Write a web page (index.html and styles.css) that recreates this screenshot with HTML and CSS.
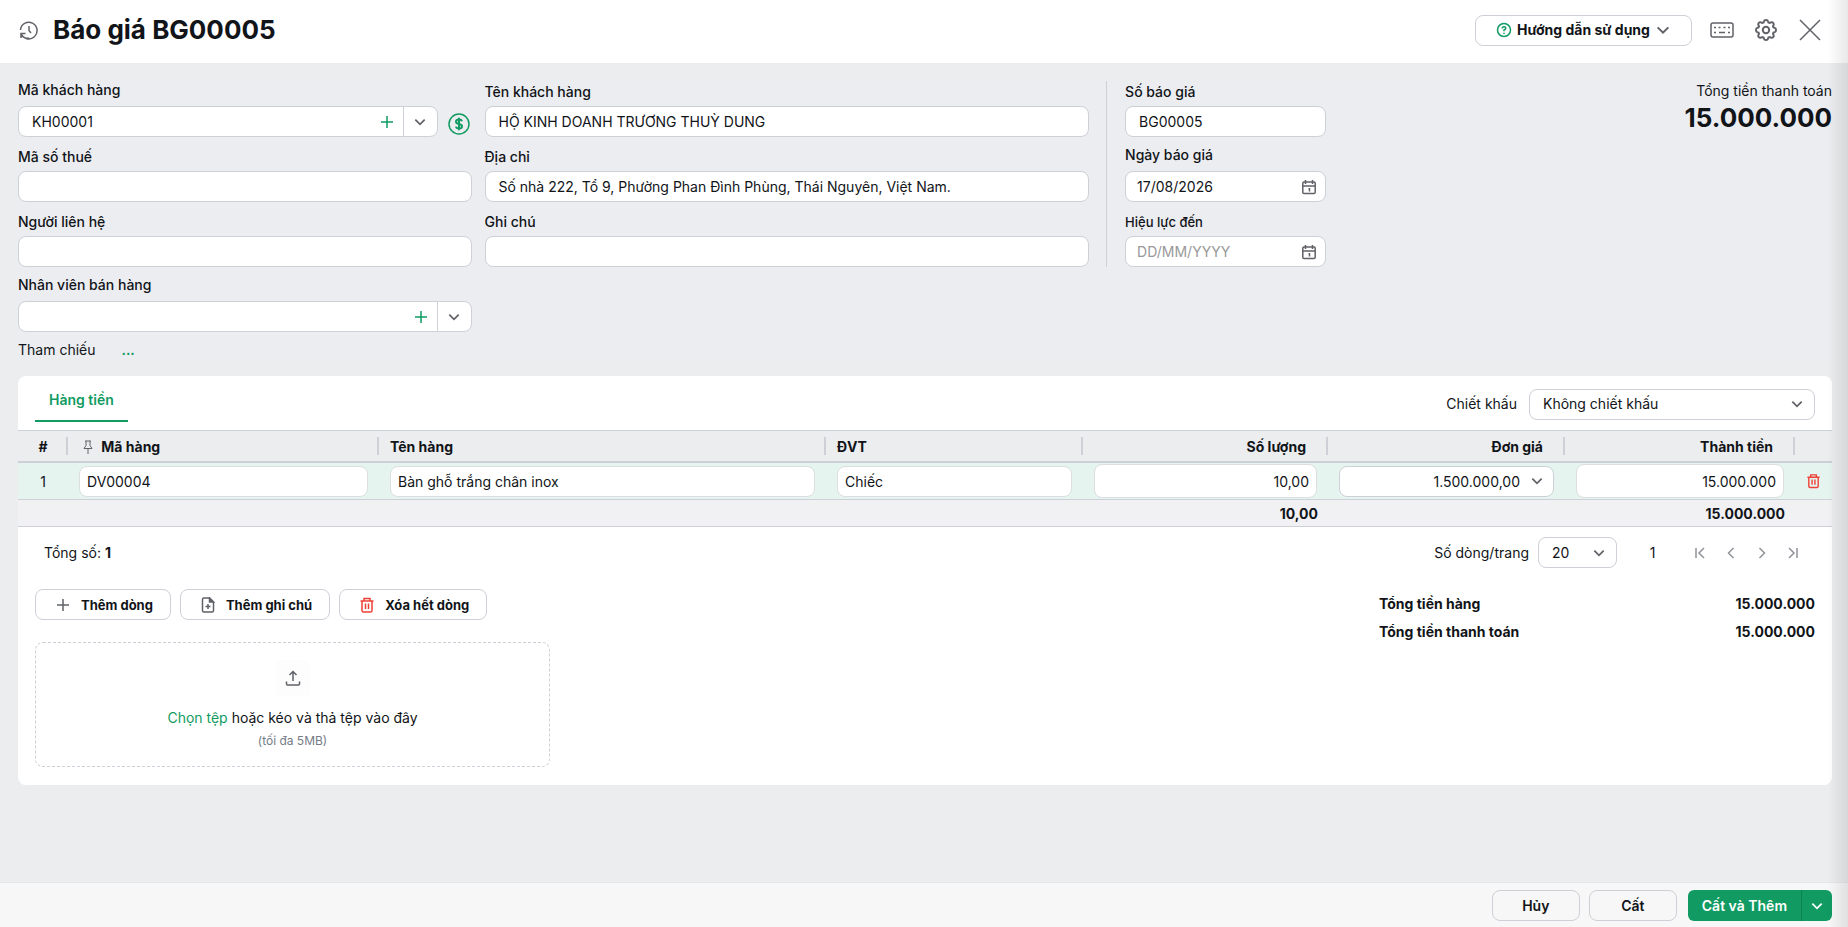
FILE: index.html
```html
<!doctype html>
<html lang="vi">
	<head>
		<meta charset="utf-8" />
		<meta name="viewport" content="width=device-width,initial-scale=1" />
		<title>Báo giá BG00005</title>
		<link rel="stylesheet" href="styles.css">
	</head>
	<body>
		<svg class="sprite" aria-hidden="true">
			<symbol id="chevron" viewBox="0 0 12 12"><path d="M2 4l4 4 4-4" /></symbol>
			<symbol id="plus" viewBox="0 0 14 14"><path d="M7 1v12M1 7h12" /></symbol>
			<symbol id="calendar" viewBox="0 0 16 16"><path d="M3 3h10q1.200 0 1.200 1.200v9q0 1.300-1.200 1.300H3q-1.200 0-1.200-1.300v-9Q1.800 3 3 3zM1.800 7h12.400M4.500 1v4M11.500 1v4M7.500 9.800h1v2.700" /></symbol>
			<symbol id="trash" viewBox="0 0 16 16"><path d="M1.500 4h13M5 4V1.500h6V4M3 4v9.500q0 1.500 1.500 1.500h7q1.500 0 1.500-1.500V4M6.500 6.500v5.500M9.500 6.500v5.500" /></symbol>
		</svg>

		<header class="header">
			<svg class="icon history" viewBox="0 0 20 20"><path d="M2 13.500a8.300 8.300 0 1 0-.5-3.500M2 18v-4.500h4.500M2.200 14a8.300 8.300 0 0 0 8 4.300M10 6v4.500l2 2.500" /></svg>
			<h1>Báo giá BG00005</h1>
			<button type="button" class="button help">
				<svg class="icon green" width="16" height="16" viewBox="0 0 16 16"><circle cx="8" cy="8" r="6.500" /><path d="M6.200 6.500q0-1.800 1.800-1.800t1.800 1.600Q9.800 7.400 8 8v1.200M8 10.700v1.200" /></svg>
				Hướng dẫn sử dụng
				<svg class="icon" width="16" height="16"><use href="#chevron" /></svg>
			</button>
			<button type="button" class="icon-button" aria-label="Phím tắt">
				<svg class="icon" width="24" height="24" viewBox="0 0 24 24"><rect x="1" y="5" width="22" height="14" rx="2" /><path d="M4 9.500h2M8.500 9.500h2M13.500 9.500h2M18 9.500h2M4 14.500h2M9 14.500h6M18 14.500h2" /></svg>
			</button>
			<button type="button" class="icon-button" aria-label="Thiết lập">
				<svg class="icon gear" width="24" height="24" viewBox="0 0 24 24"><circle cx="12" cy="12" r="3.200" /><path d="M12 2q1.700 0 2 1.300l.4 1.200 1.300.5 1.300-.7q1.200-.5 2.200.6t.4 2.100l-.6 1.300.5 1.200 1.300.4Q22 10.300 22 12t-1.200 2.100l-1.300.4-.5 1.200.6 1.300q.6 1-.4 2.100t-2.200.6l-1.300-.7-1.300.5-.4 1.200Q13.700 22 12 22t-2-1.300l-.4-1.200-1.300-.5-1.300.7q-1.200.5-2.200-.6t-.4-2.100l.6-1.300-.5-1.200-1.300-.4Q2 13.700 2 12t1.200-2.100l1.300-.4.5-1.200L4.400 7q-.6-1 .4-2.100t2.200-.6l1.300.7 1.300-.5.4-1.200Q10.300 2 12 2z" /></svg>
			</button>
			<button type="button" class="icon-button" aria-label="Đóng">
				<svg class="icon close" width="24" height="24" viewBox="0 0 24 24"><path d="M2 2l20 20M22 2L2 22" /></svg>
			</button>
		</header>

		<main class="main">
			<form class="form">
				<div class="column customer">
					<div class="field loose">
						<label for="customer-code">Mã khách hàng</label>
						<div class="field-row">
							<div class="combo">
								<input type="text" id="customer-code" value="KH00001" />
								<button type="button" class="add" aria-label="Thêm khách hàng"><svg class="icon" width="14" height="14"><use href="#plus" /></svg></button>
								<button type="button" class="caret" aria-label="Chọn khách hàng"><svg class="icon" width="14" height="14"><use href="#chevron" /></svg></button>
							</div>
							<button type="button" class="debt" aria-label="Công nợ">
								<svg class="icon" width="22" height="22" viewBox="0 0 22 22"><circle cx="11" cy="11" r="10" /><path class="thick" d="M14 8.300Q13.500 6.600 11 6.600 8 6.600 8 8.800q0 1.700 3 2.200t3 2.300q0 2.200-3 2.200-2.600 0-3-1.900M11 4.800v12.400" /></svg>
							</button>
						</div>
					</div>
					<div class="field">
						<label for="tax-code">Mã số thuế</label>
						<input class="box" type="text" id="tax-code" />
					</div>
					<div class="field">
						<label for="contact">Người liên hệ</label>
						<input class="box" type="text" id="contact" />
					</div>
					<div class="field loose">
						<label for="seller">Nhân viên bán hàng</label>
						<div class="combo">
							<input type="text" id="seller" />
							<button type="button" class="add" aria-label="Thêm nhân viên"><svg class="icon" width="14" height="14"><use href="#plus" /></svg></button>
							<button type="button" class="caret" aria-label="Chọn nhân viên"><svg class="icon" width="14" height="14"><use href="#chevron" /></svg></button>
						</div>
					</div>
					<p class="reference">Tham chiếu <a href="#">...</a></p>
				</div>
				<div class="column details">
					<div class="field">
						<label for="customer-name">Tên khách hàng</label>
						<input class="box" type="text" id="customer-name" value="HỘ KINH DOANH TRƯƠNG THUỲ DUNG" />
					</div>
					<div class="field">
						<label for="address">Địa chỉ</label>
						<input class="box" type="text" id="address" value="Số nhà 222, Tổ 9, Phường Phan Đình Phùng, Thái Nguyên, Việt Nam." />
					</div>
					<div class="field">
						<label for="note">Ghi chú</label>
						<input class="box" type="text" id="note" />
					</div>
				</div>
				<div class="column quote">
					<div class="field">
						<label for="quote-number">Số báo giá</label>
						<input class="box" type="text" id="quote-number" value="BG00005" />
					</div>
					<div class="field loose">
						<label for="quote-date">Ngày báo giá</label>
						<div class="combo date">
							<input type="text" id="quote-date" value="17/08/2026" />
							<button type="button" aria-label="Chọn ngày báo giá"><svg class="icon" width="16" height="16"><use href="#calendar" /></svg></button>
						</div>
					</div>
					<div class="field small">
						<label for="valid-until">Hiệu lực đến</label>
						<div class="combo date">
							<input type="text" id="valid-until" placeholder="DD/MM/YYYY" />
							<button type="button" aria-label="Chọn ngày hiệu lực"><svg class="icon" width="16" height="16"><use href="#calendar" /></svg></button>
						</div>
					</div>
				</div>
				<div class="grand-total">
					<p>Tổng tiền thanh toán</p>
					<strong>15.000.000</strong>
				</div>
			</form>

			<section class="card">
				<div class="card-head">
					<button type="button" class="tab">Hàng tiền</button>
					<label for="discount">Chiết khấu</label>
					<div class="select discount">
						<select id="discount"><option>Không chiết khấu</option></select>
						<svg class="icon" width="14" height="14"><use href="#chevron" /></svg>
					</div>
				</div>

				<table class="items">
					<colgroup>
						<col class="col-index" /><col class="col-code" /><col class="col-name" /><col class="col-unit" />
						<col class="col-quantity" /><col class="col-price" /><col class="col-amount" /><col class="col-action" />
					</colgroup>
					<thead>
						<tr>
							<th class="center">#</th>
							<th>
								<svg class="icon pin" width="12" height="14" viewBox="0 0 12 14"><path d="M3 1h6M4 1v4.500L2 8.500h8L8 5.500V1M6 8.500V14" /></svg>
								Mã hàng
							</th>
							<th>Tên hàng</th>
							<th>ĐVT</th>
							<th class="number">Số lượng</th>
							<th class="number">Đơn giá</th>
							<th class="number">Thành tiền</th>
							<th aria-label="Thao tác"></th>
						</tr>
					</thead>
					<tbody>
						<tr>
							<td class="center">1</td>
							<td><input type="text" value="DV00004" aria-label="Mã hàng" /></td>
							<td><input type="text" value="Bàn ghỗ trắng chân inox" aria-label="Tên hàng" /></td>
							<td><input type="text" value="Chiếc" aria-label="ĐVT" /></td>
							<td><input class="amount" type="text" value="10,00" aria-label="Số lượng" /></td>
							<td>
								<div class="combo price">
									<input type="text" value="1.500.000,00" aria-label="Đơn giá" />
									<button type="button" aria-label="Chọn đơn giá"><svg class="icon" width="14" height="14"><use href="#chevron" /></svg></button>
								</div>
							</td>
							<td><input class="amount" type="text" value="15.000.000" aria-label="Thành tiền" /></td>
							<td class="action"><button type="button" class="remove" aria-label="Xóa dòng"><svg class="icon" width="15" height="16"><use href="#trash" /></svg></button></td>
						</tr>
					</tbody>
					<tfoot>
						<tr>
							<td colspan="4"></td>
							<td>10,00</td>
							<td></td>
							<td>15.000.000</td>
							<td></td>
						</tr>
					</tfoot>
				</table>

				<div class="pager">
					<p>Tổng số: <b>1</b></p>
					<label for="page-size">Số dòng/trang</label>
					<div class="select page-size">
						<select id="page-size"><option>20</option></select>
						<svg class="icon" width="14" height="14"><use href="#chevron" /></svg>
					</div>
					<span class="page">1</span>
					<nav class="page-nav">
						<button type="button" aria-label="Trang đầu"><svg class="icon" width="12" height="12" viewBox="0 0 12 12"><path d="M2 1v10M10 1L5 6l5 5" /></svg></button>
						<button type="button" aria-label="Trang trước"><svg class="icon" width="12" height="12" viewBox="0 0 12 12"><path d="M8.500 1l-5 5 5 5" /></svg></button>
						<button type="button" aria-label="Trang sau"><svg class="icon" width="12" height="12" viewBox="0 0 12 12"><path d="M3.500 1l5 5-5 5" /></svg></button>
						<button type="button" aria-label="Trang cuối"><svg class="icon" width="12" height="12" viewBox="0 0 12 12"><path d="M2 1l5 5-5 5M10 1v10" /></svg></button>
					</nav>
				</div>

				<div class="card-foot">
					<div class="actions">
						<div class="toolbar">
							<button type="button" class="button"><svg class="icon" width="16" height="16" viewBox="0 0 16 16"><path d="M8 2v12M2 8h12" /></svg>Thêm dòng</button>
							<button type="button" class="button"><svg class="icon" width="16" height="16" viewBox="0 0 16 16"><path d="M9.500 1H4Q2.500 1 2.500 2.500v11Q2.500 15 4 15h8q1.500 0 1.500-1.500V5z" /><path class="fill" d="M9.500 1v4h4z" /><path d="M8 7v5M5.500 9.500h5" /></svg>Thêm ghi chú</button>
							<button type="button" class="button danger"><svg class="icon" width="16" height="16"><use href="#trash" /></svg>Xóa hết dòng</button>
						</div>
						<div class="dropzone">
							<span class="upload-icon"><svg class="icon" width="16" height="16" viewBox="0 0 16 16"><path d="M8 11V1.500M4.500 5L8 1.500 11.500 5M1.500 11.500V14q0 1 1 1h11q1 0 1-1v-2.500" /></svg></span>
							<p><a href="#">Chọn tệp</a> hoặc kéo và thả tệp vào đây</p>
							<small>(tối đa 5MB)</small>
						</div>
					</div>
					<dl class="totals">
						<div><dt>Tổng tiền hàng</dt><dd>15.000.000</dd></div>
						<div><dt>Tổng tiền thanh toán</dt><dd>15.000.000</dd></div>
					</dl>
				</div>
			</section>
		</main>

		<footer class="footer">
			<button type="button" class="button">Hủy</button>
			<button type="button" class="button">Cất</button>
			<div class="split">
				<button type="button">Cất và Thêm</button>
				<button type="button" class="more" aria-label="Tùy chọn khác"><svg class="icon" width="14" height="14"><use href="#chevron" /></svg></button>
			</div>
		</footer>
		<div class="edge"></div>
	</body>
</html>
```
FILE: styles.css
```css
:root {
	--green: #119b62;
	--border: #cdd0d6;
	--text: #111418;
	--icon: #606268;
	--control: 31px;
}

* {
	box-sizing: border-box;
}

body {
	display: flex;
	flex-direction: column;
	min-height: 100vh;
	margin: 0;
	background: #ebedef;
	color: var(--text);
	font: 14px/20px Inter, "Liberation Sans", sans-serif;
}

h1,
p,
dl,
dd {
	margin: 0;
}

a {
	color: var(--green);
	text-decoration: none;
}

button,
input,
select {
	margin: 0;
	border: 0;
	padding: 0;
	background: none;
	color: inherit;
	font: inherit;
}

button {
	display: flex;
	align-items: center;
	justify-content: center;
}

input {
	min-width: 0;
	width: 100%;
}

.sprite {
	display: none;
}

.icon {
	flex: none;
	fill: none;
	stroke: currentColor;
	stroke-width: 1.5;
	color: var(--icon);
}

.icon .fill {
	fill: currentColor;
}

.icon .thick {
	stroke-width: 2;
}

.icon.green {
	color: var(--green);
}

/* header */
.header {
	display: flex;
	align-items: center;
	height: 63px;
	padding: 0 26px 3px 19px;
	background: #fff;
}

.header h1 {
	flex: 1;
	padding-left: 14px;
	font-size: 26px;
	line-height: 34px;
	font-weight: 700;
}

.history {
	width: 20px;
	height: 20px;
}

.button {
	height: var(--control);
	border: 1px solid var(--border);
	border-radius: 8px;
	background: #fff;
	font-weight: 600;
}

.help {
	gap: 5px;
	width: 217px;
	margin-right: 18px;
	font-weight: 700;
}

.icon-button {
	width: 24px;
	height: 24px;
	margin-left: 20px;
}

.help + .icon-button {
	margin-left: 0;
}

.gear {
	stroke-width: 2;
}

/* quote form */
.main {
	flex: 1;
	padding: 18px 16px 18px 18px;
}

.form {
	display: flex;
	gap: 13px;
	background: #ecedf1;
}

.column {
	display: flex;
	flex-direction: column;
	gap: 9px;
}

.customer {
	width: 25%;
}

.details {
	width: 33.33%;
}

.quote {
	align-self: flex-start;
	width: 220px;
	margin-left: 4px;
	border-left: 1px solid var(--border);
	padding-left: 18px;
}

.field {
	display: flex;
	flex-direction: column;
	justify-content: flex-end;
	gap: 4px;
	height: 56px;
	font-weight: 500;
}

.field.loose {
	gap: 6px;
}

.field.small label {
	font-size: 13px;
}

.field input {
	font-weight: 400;
}

.field-row {
	display: flex;
	gap: 8px;
}

.box,
.combo {
	flex: none;
	height: var(--control);
	border: 1px solid var(--border);
	border-radius: 8px;
	background: #fff;
}

.box {
	padding: 0 13px;
}

.combo {
	display: flex;
}

.combo input {
	flex: 1;
	padding-left: 13px;
}

.combo.date input {
	padding-left: 11px;
}

.combo.date button {
	width: 32px;
}

.combo ::placeholder {
	color: #999;
}

.field-row .combo {
	flex: 1;
}

.add {
	width: 32px;
}

.add .icon,
.debt .icon {
	color: var(--green);
}

.caret {
	width: 34px;
	border-left: 1px solid var(--border);
}

.debt {
	width: 26px;
	height: 35px;
	margin-bottom: -4px;
}

.reference {
	height: 17px;
	line-height: 17px;
}

.reference a {
	margin-left: 22px;
	font-weight: 600;
}

.grand-total {
	margin-left: auto;
	text-align: right;
}

.grand-total strong {
	display: block;
	font-size: 26px;
	line-height: 34px;
	font-weight: 700;
}

/* items card */
.card {
	margin-top: 18px;
	border-radius: 8px;
	background: #fff;
}

.card-head {
	display: flex;
	align-items: center;
	height: 54px;
	padding: 2px 17px 0;
}

.tab {
	align-self: flex-start;
	height: 44px;
	margin-right: auto;
	border-bottom: 2px solid var(--green);
	padding: 2px 14px 0;
	color: var(--green);
	font-weight: 600;
}

.select {
	display: grid;
	align-items: center;
	height: var(--control);
	margin-left: 12px;
	border: 1px solid var(--border);
	border-radius: 8px;
	background: #fff;
}

.select > * {
	grid-area: 1 / 1;
}

.select select {
	appearance: none;
	height: 100%;
	padding-left: 13px;
}

.select .icon {
	justify-self: end;
	margin-right: 10px;
	pointer-events: none;
}

.discount {
	width: 286px;
}

.items {
	width: 100%;
	table-layout: fixed;
	border-collapse: separate;
	border-spacing: 0;
}

.col-index {
	width: 50px;
}

.col-code {
	width: 311px;
}

.col-unit {
	width: 257px;
}

.col-quantity {
	width: 245px;
}

.col-price {
	width: 237px;
}

.col-amount {
	width: 230px;
}

.col-action {
	width: 37px;
}

.items th {
	height: 33px;
	border: solid var(--border);
	border-width: 1px 0 2px;
	padding: 1px 0 0 11px;
	background: linear-gradient(var(--border), var(--border)) right / 2px 18px no-repeat #ebedef;
	font-weight: 700;
	text-align: left;
}

.items th:last-child {
	background-image: none;
}

.items th.number {
	padding-right: 22px;
	text-align: right;
}

.items .center {
	padding: 1px 0 0;
	text-align: center;
}

.pin {
	margin: 0 4px 0 3px;
	vertical-align: -2px;
	stroke-width: 1;
}

.items td {
	height: 37px;
	border-bottom: 1px solid var(--border);
	padding: 0 11px;
	background: #e5f4ef;
}

.items td input {
	display: block;
	height: var(--control);
	border: 1px solid #dcdee0;
	border-radius: 8px;
	padding: 0 7px;
	background: #fff;
}

.items td .amount {
	height: 34px;
	text-align: right;
}

.items td .price input {
	height: 100%;
	border: 0;
	background: none;
	padding: 0;
	text-align: right;
}

.price button {
	width: 33px;
}

.items td.action {
	padding: 0;
}

.remove {
	width: 100%;
}

.remove .icon,
.danger .icon {
	color: #ee4037;
}

.items tfoot td {
	height: 27px;
	padding: 1px 10px 0;
	background: #f1f1f4;
	font-weight: 700;
	text-align: right;
}

.pager {
	display: flex;
	align-items: center;
	padding: 10px 27px 0 26px;
}

.pager p {
	margin-right: auto;
}

.page-size {
	width: 79px;
	margin-left: 9px;
}

.page {
	width: 71px;
	text-align: center;
}

.page-nav {
	display: flex;
	gap: 7px;
}

.page-nav button {
	width: 24px;
	height: 24px;
}

.page-nav .icon {
	color: #909399;
}

.card-foot {
	display: flex;
	justify-content: space-between;
	padding: 21px 17px 18px;
}

.toolbar {
	display: flex;
	gap: 9px;
}

.toolbar .button {
	gap: 10px;
	padding: 0 17px 0 19px;
	font-size: 13px;
	font-weight: 700;
}

.dropzone {
	display: flex;
	flex-direction: column;
	align-items: center;
	width: 515px;
	height: 125px;
	margin-top: 22px;
	border: 1px dashed var(--border);
	border-radius: 8px;
	padding-top: 17px;
}

.upload-icon {
	display: grid;
	place-items: center;
	width: 34px;
	height: 36px;
	margin-bottom: 12px;
	border-radius: 6px;
	background: #fdfdfd;
}

.dropzone small {
	margin-top: 3px;
	color: #757b87;
	font-size: 12px;
}

.totals {
	display: flex;
	flex-direction: column;
	gap: 8px;
	width: 436px;
	padding-top: 5px;
	font-weight: 700;
}

.totals div {
	display: flex;
	justify-content: space-between;
}

/* bottom bar */
.footer {
	display: flex;
	justify-content: flex-end;
	gap: 9px;
	height: 45px;
	border-top: 1px solid #e6e7e9;
	padding: 7px 16px;
	background: #f7f7f7;
}

.footer .button {
	width: 88px;
	background: none;
}

.split {
	display: flex;
	height: var(--control);
	margin-left: 2px;
	border-radius: 6px;
	background: var(--green);
	color: #fff;
	font-weight: 600;
}

.split button {
	padding: 0 14px;
}

.split .more {
	width: 31px;
	border-left: 1px solid #0b8250;
	padding: 0;
}

.more .icon {
	color: #fff;
}

/* shade along the right side of the window */
.edge {
	position: fixed;
	inset: 0 0 0 auto;
	width: 20px;
	background: linear-gradient(to right, transparent, rgb(0 0 0 / 9%));
	pointer-events: none;
}
```
